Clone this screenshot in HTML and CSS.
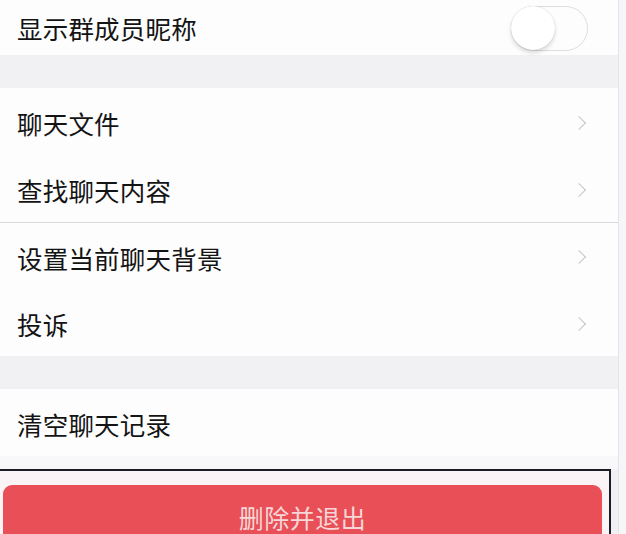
FILE: index.html
```
<!DOCTYPE html>
<html lang="zh-CN">
<head>
<meta charset="utf-8">
<link rel="stylesheet" href="styles.css">
</head>
<body>
<div class="page">
  <div class="group group-first">
    <div class="row">
      <span class="label">显示群成员昵称</span>
      <span class="toggle"><span class="knob"></span></span>
    </div>
  </div>
  <div class="gap"></div>
  <div class="group">
    <div class="row"><span class="label">聊天文件</span><span class="chev"></span></div>
    <div class="row"><span class="label">查找聊天内容</span><span class="chev"></span></div>
    <div class="row sep"><span class="label">设置当前聊天背景</span><span class="chev"></span></div>
    <div class="row"><span class="label">投诉</span><span class="chev"></span></div>
  </div>
  <div class="gap"></div>
  <div class="group">
    <div class="row"><span class="label">清空聊天记录</span></div>
  </div>
  <div class="gap small"></div>
  <div class="frame">
    <div class="danger">删除并退出</div>
  </div>
</div>
</body>
</html>
```
FILE: styles.css
```
html, body {
  margin: 0;
  padding: 0;
  height: 534px;
  overflow: hidden;
  background: #f6f6f8;
  font-family: "Noto Sans CJK SC", "Noto Sans", sans-serif;
}
.page {
  width: 618px;
  border-right: 1px solid #e4e4e8;
  background: #f1f1f3;
  min-height: 534px;
}
.group {
  background: #fdfdfe;
}
.row {
  height: 67px;
  display: flex;
  align-items: center;
  justify-content: space-between;
  padding: 2px 34px 0 17px;
  box-sizing: border-box;
}
.group-first .row {
  height: 55px;
  padding: 0 32px 0 17px;
}
.row.sep {
  border-top: 1px solid #d9d9dc;
}
.label {
  font-size: 25.5px;
  color: #141414;
  letter-spacing: 0.2px;
}
.gap {
  height: 33px;
}
.gap.small {
  height: 13px;
  background: #f8f8fa;
}
.toggle {
  position: relative;
  width: 75px;
  height: 43px;
  border: 1.5px solid #dedede;
  border-radius: 23px;
  background: #fdfdfd;
  margin-right: -2px;
  margin-top: 2px;
}
.knob {
  position: absolute;
  left: -1px;
  top: -1px;
  width: 44px;
  height: 44px;
  border-radius: 50%;
  background: #ffffff;
  box-shadow: 0 3px 4px rgba(0,0,0,0.14), 0 0 1px rgba(0,0,0,0.22);
}
.chev {
  width: 9px;
  height: 9px;
  border-top: 1.6px solid #c6c6ca;
  border-right: 1.6px solid #c6c6ca;
  transform: rotate(45deg);
  margin-right: 0;
}
.frame {
  width: 611px;
  height: 80px;
  border-top: 2px solid #1c1c28;
  border-right: 2px solid #1c1c28;
  background: #fbf4f7;
  padding: 14px 0 0 3px;
  box-sizing: border-box;
}
.danger {
  width: 599px;
  height: 64px;
  background: #e84f57;
  border-radius: 9px 9px 0 0;
  color: #f6d6d6;
  font-size: 25px;
  line-height: 28px;
  display: flex;
  align-items: center;
  justify-content: center;
  box-sizing: border-box;
  letter-spacing: 0.5px;
}
```
